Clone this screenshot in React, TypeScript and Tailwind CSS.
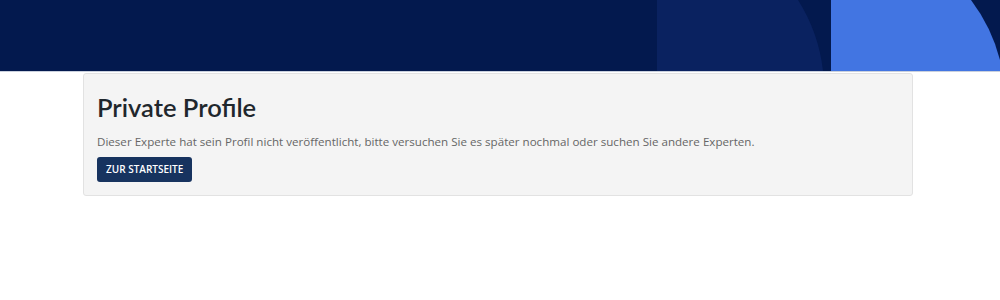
function HeaderShapes() {
	return (
		<svg
			className="absolute inset-0 h-full w-full"
			viewBox="0 0 1000 71"
			preserveAspectRatio="none"
		>
			<path d="M657 0 L798 0 A167 167 0 0 1 823 71 L657 71 Z" fill="#0a2260" />
			<path d="M831 0 L971 0 A170 170 0 0 1 1000 60 L1000 71 L831 71 Z" fill="#4275e2" />
		</svg>
	)
}

export default function App() {
	return (
		<div className="min-h-[300px] w-full bg-white font-['Open_Sans',sans-serif]">
			<div className="relative h-[72px] w-full overflow-hidden border-b border-[#c9d0dd] bg-[#03194e]">
				<HeaderShapes />
			</div>
			<div className="ml-[83px] mt-[1px] w-[830px] rounded-[3px] border border-[#e2e2e2] bg-[#f4f4f4] px-[13px] pb-[13px] pt-[16px]">
				<h1 className="font-['Lato',sans-serif] text-[25.5px] font-semibold leading-[34px] text-[#1f272d]">
					Private Profile
				</h1>
				<p className="mt-[9px] text-[11.6px] leading-[18px] text-[#666666]">
					Dieser Experte hat sein Profil nicht veröffentlicht, bitte versuchen Sie es später nochmal oder suchen Sie andere Experten.
				</p>
				<button className="mt-[6px] flex h-[25px] items-center rounded-[3px] bg-[#17335f] px-[9px] text-[10px] font-semibold uppercase text-white">
					Zur Startseite
				</button>
			</div>
		</div>
	)
}
